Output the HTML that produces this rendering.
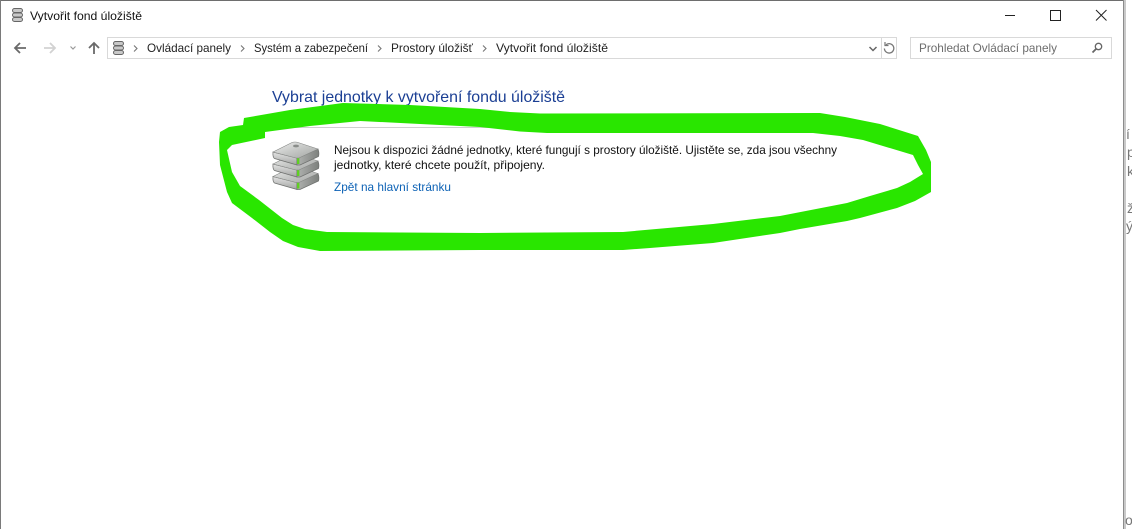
<!DOCTYPE html>
<html lang="cs"><head><meta charset="utf-8"><title>Vytvořit fond úložiště</title>
<style>
html,body{margin:0;padding:0;width:1132px;height:529px;overflow:hidden;background:#fff}
svg{display:block}
text{font-family:"Liberation Sans",sans-serif;font-size:12px}
</style></head>
<body>
<svg width="1132" height="529" viewBox="0 0 1132 529" xmlns="http://www.w3.org/2000/svg">
<defs>
<linearGradient id="top" x1="0" y1="0" x2="1" y2="1"><stop offset="0" stop-color="#eeeeee"/><stop offset=".5" stop-color="#c6c8c6"/><stop offset="1" stop-color="#a4a6a4"/></linearGradient>
<linearGradient id="front" x1="0" y1="0" x2="0" y2="1"><stop offset="0" stop-color="#e4e4e4"/><stop offset="1" stop-color="#a2a4a2"/></linearGradient>
<linearGradient id="side" x1="0" y1="0" x2="1" y2="0"><stop offset="0" stop-color="#b0b2b0"/><stop offset="1" stop-color="#7d807d"/></linearGradient>
<g id="disk">
<path d="M273 152 Q272.500 157 274.500 158.500 L297 165 L297 158 Z" fill="url(#front)" stroke="#6f716f" stroke-width=".7"/>
<path d="M297 158 L297 165 L300 165 L318.500 156.500 Q319.500 153 318 149 Z" fill="url(#side)" stroke="#6f716f" stroke-width=".7"/>
<rect x="297" y="158" width="2.400" height="6" fill="#5fd022"/>
<path d="M273 152 L292 142.500 Q295 141.500 298 142.500 L318 149 L299 158 L296 158 Z" fill="url(#top)" stroke="#848684" stroke-width=".6"/>
</g>
<g id="mini">
<rect x="0.500" y="0.500" width="10" height="4" rx="2" fill="#c8c8c8" stroke="#666"/>
<rect x="0.500" y="5" width="10" height="4" rx="2" fill="#c8c8c8" stroke="#666"/>
<rect x="0.500" y="9.500" width="10" height="4" rx="2" fill="#c8c8c8" stroke="#666"/>
</g>
</defs>

<!-- Window frame -->
<rect x="1123" y="0" width="3" height="529" fill="#c9c9c9"/>
<rect x="0" y="0" width="1124" height="1" fill="#6e6e6e"/>
<rect x="0" y="0" width="1" height="529" fill="#7a7a7a"/>
<rect x="1123" y="0" width="1" height="529" fill="#8c8c8c"/>

<!-- Peeking text behind the window -->
<g fill="#777" style="font-size:14px">
<text x="1126" y="139" style="font-size:14px">í</text>
<text x="1127" y="157" style="font-size:14px">p</text>
<text x="1127" y="176" style="font-size:14px">k</text>
<text x="1127" y="213" style="font-size:14px">ži</text>
<text x="1126" y="231" style="font-size:14px">ý</text>
<text x="1125" y="525" style="font-size:14px">ov</text>
</g>

<!-- Title bar -->
<use href="#mini" x="12" y="8"/>
<text x="30" y="20" fill="#111" textLength="112" lengthAdjust="spacingAndGlyphs">Vytvořit fond úložiště</text>
<path d="M1005 15.500H1015" stroke="#222" stroke-width="1"/>
<rect x="1050.500" y="10.500" width="10" height="10" fill="none" stroke="#222"/>
<path d="M1096 10L1106.500 20.500M1106.500 10L1096 20.500" stroke="#222" stroke-width="1" fill="none"/>

<!-- Nav arrows -->
<path d="M26 48H15M20 43L15 48L20 53" fill="none" stroke="#6a6a6a" stroke-width="1.800"/>
<path d="M55 48H44M50 43L55 48L50 53" fill="none" stroke="#d2d2d2" stroke-width="1.800"/>
<path d="M70.500 46.500L73 49L75.500 46.500" fill="none" stroke="#9a9a9a" stroke-width="1.200"/>
<path d="M94 54V43M89 48L94 43L99 48" fill="none" stroke="#6a6a6a" stroke-width="1.800"/>

<!-- Address box -->
<rect x="107.500" y="37.500" width="789" height="21" fill="#fff" stroke="#d9d9d9"/>
<path d="M881.500 38V58" stroke="#d9d9d9"/>
<use href="#mini" x="113" y="41"/>
<path d="M134 45.500L137 48.500L134 51.500" fill="none" stroke="#777" stroke-width="1.100"/>
<text x="147" y="52" fill="#222" textLength="84" lengthAdjust="spacingAndGlyphs">Ovládací panely</text>
<path d="M241 45.500L244 48.500L241 51.500" fill="none" stroke="#777" stroke-width="1.100"/>
<text x="254" y="52" fill="#222" textLength="114" lengthAdjust="spacingAndGlyphs">Systém a zabezpečení</text>
<path d="M378 45.500L381 48.500L378 51.500" fill="none" stroke="#777" stroke-width="1.100"/>
<text x="391" y="52" fill="#222" textLength="82" lengthAdjust="spacingAndGlyphs">Prostory úložišť</text>
<path d="M483 45.500L486 48.500L483 51.500" fill="none" stroke="#777" stroke-width="1.100"/>
<text x="496" y="52" fill="#222" textLength="112" lengthAdjust="spacingAndGlyphs">Vytvořit fond úložiště</text>
<path d="M869.500 47L873 50.500L876.500 47" fill="none" stroke="#666" stroke-width="1.500"/>
<path d="M886 44.800A4.700 4.700 0 1 1 884.400 48.500" fill="none" stroke="#777" stroke-width="1.300"/>
<path d="M885 42V45.500H888.500" fill="none" stroke="#777" stroke-width="1.200"/>

<!-- Search box -->
<rect x="910.500" y="37.500" width="201" height="21" fill="#fff" stroke="#d9d9d9"/>
<text x="919" y="52" fill="#6d6d6d" textLength="138" lengthAdjust="spacingAndGlyphs">Prohledat Ovládací panely</text>
<circle cx="1098.500" cy="46.500" r="3.200" fill="none" stroke="#666" stroke-width="1.300"/>
<path d="M1096 49L1092.500 52.500" stroke="#666" stroke-width="1.800"/>

<!-- Content -->
<text x="272" y="102" fill="#1b3f94" style="font-size:16px" textLength="293" lengthAdjust="spacingAndGlyphs">Vybrat jednotky k vytvoření fondu úložiště</text>
<rect x="272" y="127" width="580" height="1" fill="#cfcfcf"/>

<!-- Drives icon -->
<use href="#disk" y="24.500"/>
<use href="#disk" y="12"/>
<use href="#disk"/>
<ellipse cx="296" cy="146" rx="3" ry="1.400" fill="#8a8d8a"/>

<text x="334" y="154" fill="#111" textLength="503" lengthAdjust="spacingAndGlyphs">Nejsou k dispozici žádné jednotky, které fungují s prostory úložiště. Ujistěte se, zda jsou všechny</text>
<text x="334" y="169" fill="#111" textLength="211" lengthAdjust="spacingAndGlyphs">jednotky, které chcete použít, připojeny.</text>
<text x="334" y="191" fill="#0d62b5" textLength="117" lengthAdjust="spacingAndGlyphs">Zpět na hlavní stránku</text>

<!-- Green marker stroke -->
<path fill="#29e600" fill-rule="evenodd" d="M244 118 L290 110 L343 103 L410 105 L480 109 L510 112 L540 113.500 L820 113 L845 117 L880 124 L918 136 L926 150 L931 162 L931 192 L915 201 L897 208 L860 218 L847 221 L800 229 L780 233 L713 243 L650 248 L623 250 L480 250 L320 251 L298 247 L283 241 L270 232 L252 218 L232 203 L227 192 L220 165 L219 142 L220 132 L229 127 L243 125 Z
M265 138 L265 132 L310 126 L360 121 L420 124 L480 127 L520 131.500 L547 133 L813 133 L840 136 L863 140 L913 155 L918 165 L923 174 L910 182 L897 188 L870 196 L847 203 L780 216 L713 224 L623 232 L480 233 L327 232 L305 229 L293 225 L282 218 L259 200 L240 186 L232 172 L227 150 L232 145 Z"/>
</svg>
</body></html>
